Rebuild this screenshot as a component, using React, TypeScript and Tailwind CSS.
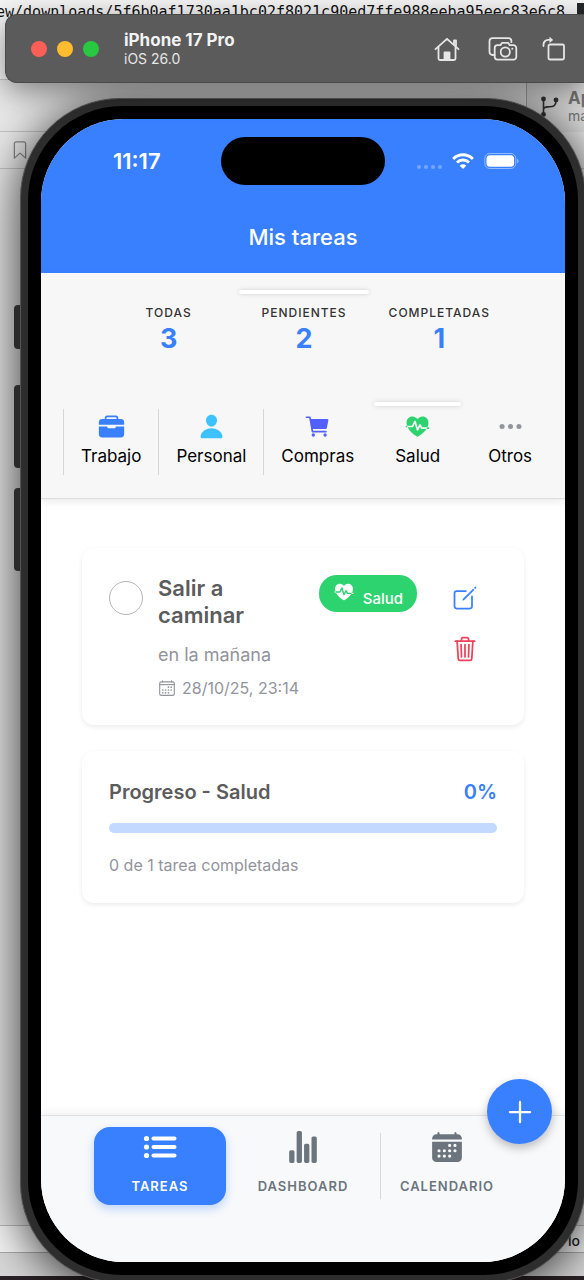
import React from "react";
import type { ReactNode } from "react";
import {
  IoBriefcase,
  IoPerson,
  IoCart,
  IoFitness,
  IoEllipsisHorizontal,
  IoCalendarOutline,
  IoCreateOutline,
  IoTrashOutline,
  IoStatsChart,
  IoCalendar,
  IoAdd,
  IoBookmarkOutline,
} from "react-icons/io5";

function HomeIcon() {
  return (
    <svg viewBox="0 0 26 26" className="size-[26px]" fill="none" stroke="currentColor" strokeWidth="1.8" strokeLinecap="round" strokeLinejoin="round">
      <path d="M1.5 13.2 13 2.8l11.500 10.400M4.500 11v11.500a1.500 1.500 0 0 0 1.500 1.500h14a1.500 1.500 0 0 0 1.500-1.500V11M20 9V4.500h2v6.300" />
      <path d="M10.500 24v-7.500h5V24z" fill="currentColor" />
    </svg>
  );
}

function CameraIcon() {
  return (
    <svg viewBox="0 0 30 26" className="h-[26px] w-[30px]" fill="none" stroke="currentColor" strokeWidth="1.800" strokeLinejoin="round">
      <path d="M6.500 19H4.500A3 3 0 0 1 1.500 16V5A3 3 0 0 1 4.500 2.200h16A3 3 0 0 1 23.400 5v1.200" strokeLinecap="round" />
      <path d="M9.500 9.200h3l1.400-2.300h6.400l1.400 2.300h3.800a2.800 2.800 0 0 1 2.800 2.800v8.800a2.800 2.800 0 0 1-2.800 2.800h-16a2.800 2.800 0 0 1-2.800-2.800V12a2.800 2.800 0 0 1 2.800-2.800z" />
      <circle cx="17.300" cy="16" r="4.600" />
      <circle cx="24.300" cy="12.700" r="1" fill="currentColor" stroke="none" />
    </svg>
  );
}

function RotateIcon() {
  return (
    <svg viewBox="0 0 24 26" className="h-[26px] w-6" fill="none" stroke="currentColor" strokeWidth="1.800" strokeLinejoin="round">
      <rect x="6.500" y="8.500" width="15.500" height="15" rx="1.500" />
      <path d="M1.500 10V8.500a4.600 4.600 0 0 1 4.600-4.600H9" strokeLinecap="round" />
      <path d="M7.500 .8 11.200 3.900 7.500 7z" fill="currentColor" stroke="none" />
    </svg>
  );
}

function BranchIcon() {
  return (
    <svg viewBox="0 0 20 22" className="h-[22px] w-5 shrink-0" fill="none" stroke="currentColor" strokeWidth="1.600">
      <path d="M3.500 3v15.500M3.500 13.500c0-3 3-2.500 6-2.700 4-.2 6.500-.8 6.500-6.300" />
      <circle cx="3.500" cy="3" r="2.400" fill="currentColor" stroke="none" />
      <circle cx="16" cy="4" r="2.400" fill="currentColor" stroke="none" />
      <circle cx="3.500" cy="18.500" r="2.400" fill="currentColor" stroke="none" />
    </svg>
  );
}

function ListIcon() {
  return (
    <svg viewBox="0 0 34 24" className="h-6 w-[34px]" fill="currentColor">
      <circle cx="3.500" cy="3.500" r="2.600" />
      <circle cx="3.500" cy="12" r="2.600" />
      <circle cx="3.500" cy="20.500" r="2.600" />
      <rect x="8.500" y="1.600" width="25" height="3.900" rx="1.950" />
      <rect x="8.500" y="10.100" width="25" height="3.900" rx="1.950" />
      <rect x="8.500" y="18.600" width="25" height="3.900" rx="1.950" />
    </svg>
  );
}

function WifiIcon() {
  return (
    <svg viewBox="0 0 22 16" className="h-4 w-[22px]" fill="none" stroke="white" strokeWidth="2.900">
      <path d="M1.200 5.900a13.800 13.800 0 0 1 19.600 0" />
      <path d="M5 9.500a8.500 8.500 0 0 1 12 0" />
      <path d="M11 16 7.700 12.700a4.700 4.700 0 0 1 6.600 0z" fill="white" stroke="none" />
    </svg>
  );
}

function BatteryIcon() {
  return (
    <svg viewBox="0 0 36 18" className="h-[18px] w-9">
      <rect x=".8" y="1.500" width="31" height="15" rx="5" fill="none" stroke="white" strokeOpacity=".45" />
      <rect x="2.500" y="3.200" width="27.600" height="11.600" rx="3.500" fill="white" />
      <path d="M33.200 6.500c1.700.8 1.700 4.200 0 5z" fill="white" fillOpacity=".5" />
    </svg>
  );
}

const filters = [
  { label: "TODAS", count: 3, active: false },
  { label: "PENDIENTES", count: 2, active: true },
  { label: "COMPLETADAS", count: 1, active: false },
];

const categories: { label: string; icon: ReactNode; active: boolean; divider: boolean }[] = [
  { label: "Trabajo", icon: <IoBriefcase className="text-[#3880ff]" />, active: false, divider: true },
  { label: "Personal", icon: <IoPerson className="text-[#3dc2ff]" />, active: false, divider: true },
  { label: "Compras", icon: <IoCart className="text-[#5260ff]" />, active: false, divider: true },
  { label: "Salud", icon: <IoFitness className="text-[#2dd36f]" />, active: true, divider: false },
  { label: "Otros", icon: <IoEllipsisHorizontal className="text-[#92949c]" />, active: false, divider: false },
];

function Desktop() {
  return (
    <div className="absolute inset-0 overflow-hidden bg-[#e9e9e9]">
      <div className="absolute inset-x-0 top-0 h-[80px] border-b border-[#c8c8c8] bg-[#f4f4f4]" />
      <p className="absolute -left-1 top-1 whitespace-nowrap font-['DejaVu_Sans_Mono',monospace] text-[15px] leading-4 text-[#111]">
        ew/downloads/5f6b0af1730aa1bc02f8021c90ed7ffe988eeba95eec83e6c8
      </p>
      <div className="absolute right-0 top-[3px] h-3 w-[7px] bg-[#25272b]" />
      <div className="absolute inset-x-0 top-[131px] h-[38px] border-y border-[#c4c4c4]" />
      <IoBookmarkOutline className="absolute left-[10px] top-[140px] size-5 text-[#858585]" />
      <div className="absolute right-0 top-[80px] flex h-[52px] w-[58px] gap-2 border-l border-[#aaa] bg-[#dedede] pl-[13px] pt-2">
        <span className="mt-2 text-[#333]"><BranchIcon /></span>
        <div className="text-[#777]">
          <p className="text-[17px] font-bold leading-5">App</p>
          <p className="text-[14px] leading-4">main</p>
        </div>
      </div>
      <div className="absolute inset-x-0 bottom-0 h-[55px] border-t border-[#bbb] bg-[#f6f6f6]">
        <p className="absolute right-1 top-1 text-[14px] font-medium text-[#222]">lo</p>
      </div>
      <div className="absolute inset-x-0 bottom-0 h-7 border-t border-[#aaa] bg-[#d9d9d9]" />
      <div className="absolute inset-x-0 bottom-0 h-1 bg-[#2a2226]" />
    </div>
  );
}

function SimulatorBar() {
  return (
    <header className="relative z-10 ml-[5px] mt-[14px] flex h-[69px] shrink-0 items-center rounded-l-xl border border-r-0 border-[#4a4a4a] bg-[#5b5b5b] pl-[25px] pr-[18px] text-[#e6e6e6] shadow-[0_8px_30px_rgba(0,0,0,0.45)]">
      <div className="flex gap-[10px]">
        <button aria-label="Cerrar" className="size-4 rounded-full bg-[#ff5f57]" />
        <button aria-label="Minimizar" className="size-4 rounded-full bg-[#febc2e]" />
        <button aria-label="Ampliar" className="size-4 rounded-full bg-[#28c840]" />
      </div>
      <div className="ml-[25px] flex-1">
        <h1 className="text-[17px] font-bold leading-5 text-[#f2f2f2]">iPhone 17 Pro</h1>
        <p className="text-[14px] leading-[18px]">iOS 26.0</p>
      </div>
      <div className="flex items-center gap-7">
        <button aria-label="Inicio"><HomeIcon /></button>
        <button aria-label="Captura"><CameraIcon /></button>
        <button aria-label="Rotar" className="-ml-1"><RotateIcon /></button>
      </div>
    </header>
  );
}

function StatusBar() {
  return (
    <div className="grid grid-cols-[1fr_164px_1fr] items-center pt-[18px]">
      <p className="pl-[72px] text-[22px] font-semibold leading-6">11:17</p>
      <div className="h-12 rounded-full bg-black" />
      <div className="flex items-center pl-8">
        <div className="mt-3 flex gap-[3px]">
          <span className="size-1 rounded-full bg-white/30" />
          <span className="size-1 rounded-full bg-white/30" />
          <span className="size-1 rounded-full bg-white/30" />
          <span className="size-1 rounded-full bg-white/30" />
        </div>
        <div className="ml-[10px] flex items-center gap-[10px]">
          <WifiIcon />
          <BatteryIcon />
        </div>
      </div>
    </div>
  );
}

function Filters() {
  return (
    <section className="relative z-10 border-b border-[#dcdcdc] bg-[#f7f7f7] pb-[19px] shadow-[0_3px_8px_rgba(0,0,0,0.08)]">
      <div className="grid grid-cols-3 pl-[60px] pr-[58px] pt-[17px]">
        {filters.map((f) => (
          <button key={f.label} className="flex flex-col items-center">
            <span className={f.active ? "h-1 w-[130px] rounded-sm bg-white shadow-[0_0_5px_rgba(0,0,0,0.16)]" : "h-1"} />
            <span className="mt-[10px] text-[12px] font-medium leading-[18px] tracking-[1px] text-[#333]">{f.label}</span>
            <span className="text-[27px] font-bold leading-[34px] text-[#3880ff]">{f.count}</span>
          </button>
        ))}
      </div>
      <div className="mt-[47px] flex pl-[22px]">
        {categories.map((c) => (
          <button key={c.label} className="relative flex pb-1 pt-[6px]">
            {c.divider && <span className="h-[66px] w-px bg-[#d6d6d6]" />}
            {c.active && <span className="absolute inset-x-[3px] -top-px h-1 rounded-sm bg-white shadow-[0_0_5px_rgba(0,0,0,0.16)]" />}
            <span className={c.divider ? "flex flex-col items-center px-[17px] pt-1 text-[17px] leading-7 text-black" : "flex flex-col items-center px-6 pt-1 text-[17px] leading-7 text-black"}>
              <span className="pb-[2px] text-[27px]">{c.icon}</span>
              {c.label}
            </span>
          </button>
        ))}
      </div>
    </section>
  );
}

function TaskCard() {
  return (
    <article className="flex items-start rounded-xl bg-white px-[27px] pb-[25px] pt-[27px] shadow-[0_2px_5px_rgba(0,0,0,0.08)]">
      <input type="checkbox" aria-label="Completar Salir a caminar" className="mt-[6px] size-[34px] shrink-0 appearance-none rounded-full border border-[#b5b5b5]" />
      <div className="ml-[15px] min-w-0 flex-1">
        <h3 className="w-28 text-[22px] font-semibold leading-[27px] text-[#5c5c5c]">Salir a caminar</h3>
        <p className="mt-[14px] text-[18px] leading-6 text-[#92949c]">en la mañana</p>
        <p className="mt-[9px] flex items-center gap-[6px] whitespace-nowrap text-[16px] leading-6 text-[#92949c]">
          <IoCalendarOutline className="size-[18px]" />
          28/10/25, 23:14
        </p>
      </div>
      <div className="flex h-[37px] shrink-0 gap-2 rounded-[18px] bg-[#2dd36f] px-[14px] text-[15px] font-medium text-white">
        <IoFitness className="mt-[6px] size-[22px]" />
        <span className="mt-[14px] leading-5">Salud</span>
      </div>
      <div className="ml-[34px] mr-[18px] mt-[9px] flex shrink-0 flex-col gap-[23px]">
        <button aria-label="Editar"><IoCreateOutline className="size-7 text-[#3880ff]" /></button>
        <button aria-label="Eliminar"><IoTrashOutline className="size-7 text-[#eb445a]" /></button>
      </div>
    </article>
  );
}

function ProgressCard() {
  return (
    <article className="rounded-xl bg-white px-[27px] pb-[26px] pt-[26px] shadow-[0_2px_5px_rgba(0,0,0,0.08)]">
      <div className="flex items-center justify-between text-[20px] font-semibold leading-[30px]">
        <h3 className="text-[#5c5c5c]">Progreso - Salud</h3>
        <span className="text-[#3880ff]">0%</span>
      </div>
      <div role="progressbar" aria-label="Progreso" aria-valuenow={0} aria-valuemin={0} aria-valuemax={100} className="mt-4 h-[10px] rounded-full bg-[#c3d9ff]" />
      <p className="mt-5 text-[16px] leading-6 text-[#92949c]">0 de 1 tarea completadas</p>
    </article>
  );
}

function TabBar() {
  return (
    <nav className="relative border-t border-[#dedede] bg-[#f8f9fb] pb-[57px] pl-[53px] pt-[11px] shadow-[0_-3px_8px_rgba(0,0,0,0.06)]">
      <div className="flex text-[13px] font-semibold leading-5 tracking-[1px] text-[#6c757d]">
        <a href="#tareas" className="flex h-[78px] w-[132px] shrink-0 flex-col items-center rounded-2xl bg-[#3880ff] pt-[2px] text-white shadow-[0_4px_10px_rgba(56,128,255,0.3)]">
          <span className="flex h-9 items-center"><ListIcon /></span>
          <span className="mt-[11px]">TAREAS</span>
        </a>
        <a href="#dashboard" className="ml-[11px] flex h-[78px] w-[132px] shrink-0 flex-col items-center pt-[2px]">
          <span className="flex h-9 items-center"><IoStatsChart className="size-[34px]" /></span>
          <span className="mt-[11px]">DASHBOARD</span>
        </a>
        <span className="ml-[11px] mt-[6px] h-[66px] w-px bg-[#d6d8dc]" />
        <a href="#calendario" className="flex h-[78px] w-[132px] shrink-0 flex-col items-center pt-[2px]">
          <span className="flex h-9 items-center"><IoCalendar className="size-[34px]" /></span>
          <span className="mt-[11px]">CALENDARIO</span>
        </a>
      </div>
      <button aria-label="Añadir tarea" className="absolute -top-[37px] right-[13px] flex size-[65px] items-center justify-center rounded-full bg-[#3880ff] text-white shadow-[0_4px_10px_rgba(0,0,0,0.25)]">
        <IoAdd className="size-9" />
      </button>
    </nav>
  );
}

export default function App() {
  return (
    <div className="relative flex h-screen min-h-[900px] flex-col overflow-hidden font-[Inter,'Liberation_Sans',sans-serif]">
      <Desktop />
      <SimulatorBar />
      <div className="relative -mb-[3px] -mr-[2px] ml-5 mt-[15px] flex min-h-0 flex-1 flex-col rounded-[100px] border border-[#555] bg-[#2d2d2d] p-[7px] shadow-[0_6px_50px_rgba(0,0,0,0.8)]">
        <span className="absolute -left-[7px] top-[206px] h-11 w-[6px] rounded-l-sm bg-[#2a2a2a]" />
        <span className="absolute -left-[7px] top-[286px] h-[83px] w-[6px] rounded-l-sm bg-[#2a2a2a]" />
        <span className="absolute -left-[7px] top-[389px] h-[83px] w-[6px] rounded-l-sm bg-[#2a2a2a]" />
        <div className="flex min-h-0 flex-1 flex-col rounded-[94px] bg-black p-[13px]">
          <div className="flex min-h-0 flex-1 flex-col overflow-hidden rounded-[83px] bg-white">
            <div className="bg-[#3880ff] pb-5 text-white">
              <StatusBar />
              <h2 className="mt-9 text-center text-[22px] font-medium leading-8">Mis tareas</h2>
            </div>
            <Filters />
            <main className="flex flex-1 flex-col gap-[26px] px-[41px] pt-[49px]">
              <TaskCard />
              <ProgressCard />
            </main>
            <TabBar />
          </div>
        </div>
      </div>
    </div>
  );
}
